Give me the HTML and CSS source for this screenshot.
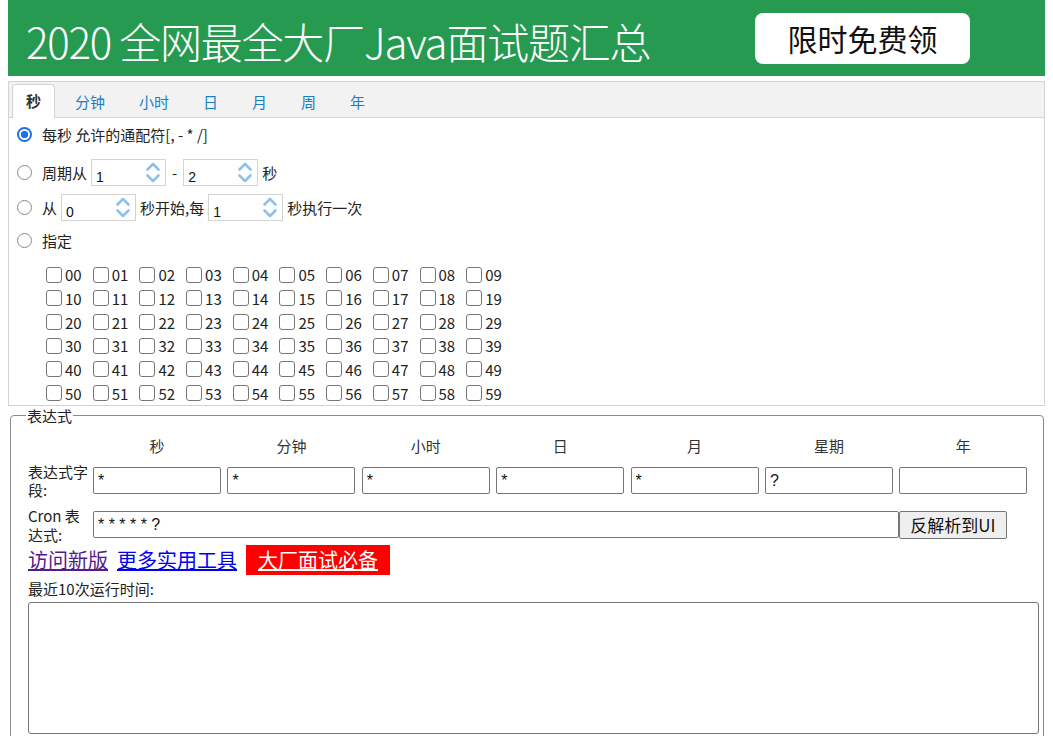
FILE: index.html
```html
<!DOCTYPE html>
<html lang="zh-CN">
<head>
<meta charset="utf-8">
<title>Cron表达式生成器</title>
<link rel="stylesheet" href="styles.css">
</head>
<body>
<div class="banner">
  <span class="banner-title">2020 全网最全大厂Java面试题汇总</span>
  <span class="banner-btn">限时免费领</span>
</div>

<div class="tabs">
  <div class="tabs-header">
    <span class="tab active">秒</span>
    <span class="tab">分钟</span>
    <span class="tab">小时</span>
    <span class="tab">日</span>
    <span class="tab">月</span>
    <span class="tab">周</span>
    <span class="tab">年</span>
  </div>
  <div class="tab-body">
    <div class="opt r1"><input class="radio" type="radio" name="sec" checked><span>每秒 允许的通配符[, - * /]</span></div>
    <div class="opt r2"><input class="radio" type="radio" name="sec"><span>周期从</span>
      <span class="spinner"><input class="spin-input" value="1"><svg class="spin-arrows" width="18" height="25" viewBox="0 0 18 25"><polyline points="3.5,9.5 9,4 14.5,9.5"/><polyline points="3.5,15.5 9,21 14.5,15.5"/></svg></span>
      <span class="dash">-</span>
      <span class="spinner"><input class="spin-input" value="2"><svg class="spin-arrows" width="18" height="25" viewBox="0 0 18 25"><polyline points="3.5,9.5 9,4 14.5,9.5"/><polyline points="3.5,15.5 9,21 14.5,15.5"/></svg></span>
      <span>秒</span></div>
    <div class="opt r3"><input class="radio" type="radio" name="sec"><span>从</span>
      <span class="spinner"><input class="spin-input" value="0"><svg class="spin-arrows" width="18" height="25" viewBox="0 0 18 25"><polyline points="3.5,9.5 9,4 14.5,9.5"/><polyline points="3.5,15.5 9,21 14.5,15.5"/></svg></span>
      <span>秒开始,每</span>
      <span class="spinner"><input class="spin-input" value="1"><svg class="spin-arrows" width="18" height="25" viewBox="0 0 18 25"><polyline points="3.5,9.5 9,4 14.5,9.5"/><polyline points="3.5,15.5 9,21 14.5,15.5"/></svg></span>
      <span>秒执行一次</span></div>
    <div class="opt r4"><input class="radio" type="radio" name="sec"><span>指定</span></div>
    <div class="grid">
      <label class="cb"><input type="checkbox">00</label><label class="cb"><input type="checkbox">01</label><label class="cb"><input type="checkbox">02</label><label class="cb"><input type="checkbox">03</label><label class="cb"><input type="checkbox">04</label><label class="cb"><input type="checkbox">05</label><label class="cb"><input type="checkbox">06</label><label class="cb"><input type="checkbox">07</label><label class="cb"><input type="checkbox">08</label><label class="cb"><input type="checkbox">09</label>
      <label class="cb"><input type="checkbox">10</label><label class="cb"><input type="checkbox">11</label><label class="cb"><input type="checkbox">12</label><label class="cb"><input type="checkbox">13</label><label class="cb"><input type="checkbox">14</label><label class="cb"><input type="checkbox">15</label><label class="cb"><input type="checkbox">16</label><label class="cb"><input type="checkbox">17</label><label class="cb"><input type="checkbox">18</label><label class="cb"><input type="checkbox">19</label>
      <label class="cb"><input type="checkbox">20</label><label class="cb"><input type="checkbox">21</label><label class="cb"><input type="checkbox">22</label><label class="cb"><input type="checkbox">23</label><label class="cb"><input type="checkbox">24</label><label class="cb"><input type="checkbox">25</label><label class="cb"><input type="checkbox">26</label><label class="cb"><input type="checkbox">27</label><label class="cb"><input type="checkbox">28</label><label class="cb"><input type="checkbox">29</label>
      <label class="cb"><input type="checkbox">30</label><label class="cb"><input type="checkbox">31</label><label class="cb"><input type="checkbox">32</label><label class="cb"><input type="checkbox">33</label><label class="cb"><input type="checkbox">34</label><label class="cb"><input type="checkbox">35</label><label class="cb"><input type="checkbox">36</label><label class="cb"><input type="checkbox">37</label><label class="cb"><input type="checkbox">38</label><label class="cb"><input type="checkbox">39</label>
      <label class="cb"><input type="checkbox">40</label><label class="cb"><input type="checkbox">41</label><label class="cb"><input type="checkbox">42</label><label class="cb"><input type="checkbox">43</label><label class="cb"><input type="checkbox">44</label><label class="cb"><input type="checkbox">45</label><label class="cb"><input type="checkbox">46</label><label class="cb"><input type="checkbox">47</label><label class="cb"><input type="checkbox">48</label><label class="cb"><input type="checkbox">49</label>
      <label class="cb"><input type="checkbox">50</label><label class="cb"><input type="checkbox">51</label><label class="cb"><input type="checkbox">52</label><label class="cb"><input type="checkbox">53</label><label class="cb"><input type="checkbox">54</label><label class="cb"><input type="checkbox">55</label><label class="cb"><input type="checkbox">56</label><label class="cb"><input type="checkbox">57</label><label class="cb"><input type="checkbox">58</label><label class="cb"><input type="checkbox">59</label>
    </div>
  </div>
</div>

<fieldset class="expr">
  <legend>表达式</legend>
  <div class="expr-grid">
    <div></div>
    <div class="head">秒</div>
    <div class="head">分钟</div>
    <div class="head">小时</div>
    <div class="head">日</div>
    <div class="head">月</div>
    <div class="head">星期</div>
    <div class="head">年</div>

    <div class="lbl">表达式字段:</div>
    <div class="cell"><input class="field" value="*"></div>
    <div class="cell"><input class="field" value="*"></div>
    <div class="cell"><input class="field" value="*"></div>
    <div class="cell"><input class="field" value="*"></div>
    <div class="cell"><input class="field" value="*"></div>
    <div class="cell"><input class="field" value="?"></div>
    <div class="cell"><input class="field" value=""></div>

    <div class="lbl lbl-cron">Cron 表达式:</div>
    <div class="cron-cell"><input class="cron" value="* * * * * ?"></div>
    <div class="cell"><button class="parse">反解析到UI</button></div>
  </div>
  <div class="links">
    <a class="visited" href="#">访问新版</a>
    <a class="plain" href="#">更多实用工具</a>
    <a class="hot" href="#">大厂面试必备</a>
  </div>
  <div class="recent">最近10次运行时间:</div>
  <textarea class="runs"></textarea>
</fieldset>
</body>
</html>
```

FILE: styles.css
```css
html { overflow: hidden; }
body {
  margin: 0 8px;
  font-family: "Noto Sans CJK SC", "Noto Sans", sans-serif;
  font-size: 15px;
  color: #222;
  background: #fff;
}

/* banner */
.banner {
  height: 76px;
  background: #279a51;
  display: flex;
  align-items: center;
  padding-left: 18px;
}
.banner-title {
  color: #fff;
  font-size: 42px;
  font-weight: 300;
  letter-spacing: -1.2px;
  line-height: 1;
  padding-top: 6px;
}
.banner-btn {
  margin-left: auto;
  margin-right: 75px;
  width: 215px;
  height: 51px;
  background: #fff;
  border-radius: 8px;
  display: flex;
  align-items: center;
  justify-content: center;
  font-size: 30px;
  color: #111;
}

/* tabs */
.tabs {
  margin-top: 5px;
  border: 1px solid #d3d3d3;
}
.tabs-header {
  height: 36px;
  box-sizing: border-box;
  background: #f2f2f2;
  border-bottom: 1px solid #d3d3d3;
  display: flex;
  align-items: flex-end;
  padding-left: 3px;
}
.tab {
  height: 32px;
  line-height: 32px;
  padding: 0 13px;
  margin-right: 6px;
  margin-bottom: -1px;
  border: 1px solid transparent;
  border-bottom: none;
  color: #1a7fc4;
  font-size: 15px;
}
.tab.active {
  background: #fff;
  border-color: #d3d3d3;
  border-radius: 4px 4px 0 0;
  color: #333;
  font-weight: bold;
  height: 33px;
}

.tab-body { padding: 0; }
.opt {
  display: flex;
  align-items: center;
  gap: 4px;
  height: 27px;
  padding-left: 8px;
}
.r1 { margin-top: 3px; }
.r2 { margin-top: 11px; }
.r3 { margin-top: 8px; }
.r4 { margin-top: 6px; }

.radio {
  appearance: none;
  -webkit-appearance: none;
  width: 15px;
  height: 15px;
  margin: 0 6px 0 0;
  border: 1px solid #8a8a8a;
  border-radius: 50%;
  background: #fff;
  flex: none;
}
.radio:checked {
  border: 2px solid #1a73e8;
  background: radial-gradient(circle, #1a73e8 0 3.4px, #fff 4px);
}

.dash { margin: 0 2px; }

.spinner {
  display: inline-flex;
  align-items: center;
  width: 75px;
  height: 27px;
  box-sizing: border-box;
  border: 1px solid #d4d4d4;
  background: #fff;
}
.spin-input {
  width: 50px;
  height: 100%;
  box-sizing: border-box;
  border: none;
  outline: none;
  padding: 9px 0 0 4px;
  margin: 0;
  font-family: "Liberation Sans", Arial, sans-serif;
  font-size: 14px;
  color: #111;
  background: transparent;
}
.spin-arrows {
  margin-left: auto;
  margin-right: 3px;
  fill: none;
  stroke: #8cc2ea;
  stroke-width: 2.6;
  stroke-linecap: round;
  stroke-linejoin: round;
}

/* checkbox grid */
.grid {
  display: grid;
  grid-template-columns: repeat(10, 46.7px);
  grid-auto-rows: 23.67px;
  margin: 9px 0 0 37px;
}
.cb {
  display: flex;
  align-items: center;
  gap: 3px;
  font-size: 15px;
  color: #222;
}
.cb input {
  appearance: none;
  -webkit-appearance: none;
  width: 16px;
  height: 16px;
  margin: 0;
  border: 1px solid #777;
  border-radius: 3px;
  background: #fff;
  flex: none;
}

/* expression fieldset */
.expr {
  margin: 0 2px;
  padding: 0 4px 12px 17px;
  border: 1px solid #8c8c8c;
  border-radius: 4px;
}
.expr legend {
  padding: 0 1px;
  margin-left: -2px;
  line-height: 20px;
  font-size: 15px;
}
.expr-grid {
  display: grid;
  grid-template-columns: 65px repeat(7, 134.4px);
  row-gap: 7px;
  margin-top: 10px;
  align-items: center;
}
.head {
  width: 128px;
  text-align: center;
  line-height: 20px;
  color: #333;
}
.lbl {
  line-height: 18px;
  padding-right: 2px;
}
.lbl-cron { line-height: 19px; }
.field {
  display: block;
  width: 128px;
  height: 27px;
  box-sizing: border-box;
  border: 1px solid #767676;
  border-radius: 2px;
  padding: 0 4px;
  margin: 0;
  font-family: "Liberation Sans", Arial, sans-serif;
  font-size: 16px;
  color: #111;
}
.cron-cell { grid-column: 2 / span 6; }
.cron {
  display: block;
  width: 100%;
  height: 27px;
  box-sizing: border-box;
  border: 1px solid #767676;
  border-radius: 2px;
  padding: 0 4px;
  margin: 0;
  font-family: "Liberation Sans", Arial, sans-serif;
  font-size: 16px;
  color: #111;
}
.parse {
  height: 28px;
  padding: 0 10px;
  margin: 0;
  border: 1px solid #767676;
  border-radius: 2px;
  background: #efefef;
  font-family: "Noto Sans CJK SC", sans-serif;
  font-size: 17px;
  color: #111;
  line-height: 1;
}

.links {
  display: flex;
  align-items: center;
  gap: 9px;
  margin-top: 1px;
  height: 30px;
  font-size: 20px;
}
.links a { text-decoration: underline; }
.visited { color: #551a8b; }
.plain { color: #0000ee; }
.hot {
  background: #ff0000;
  color: #fff;
  height: 30px;
  line-height: 30px;
  padding: 0 12px;
}
.recent {
  margin-top: 4px;
  line-height: 20px;
}
.runs {
  display: block;
  width: 1011px;
  height: 132px;
  box-sizing: border-box;
  margin-top: 3px;
  border: 1px solid #767676;
  border-radius: 3px;
  resize: none;
}
```
